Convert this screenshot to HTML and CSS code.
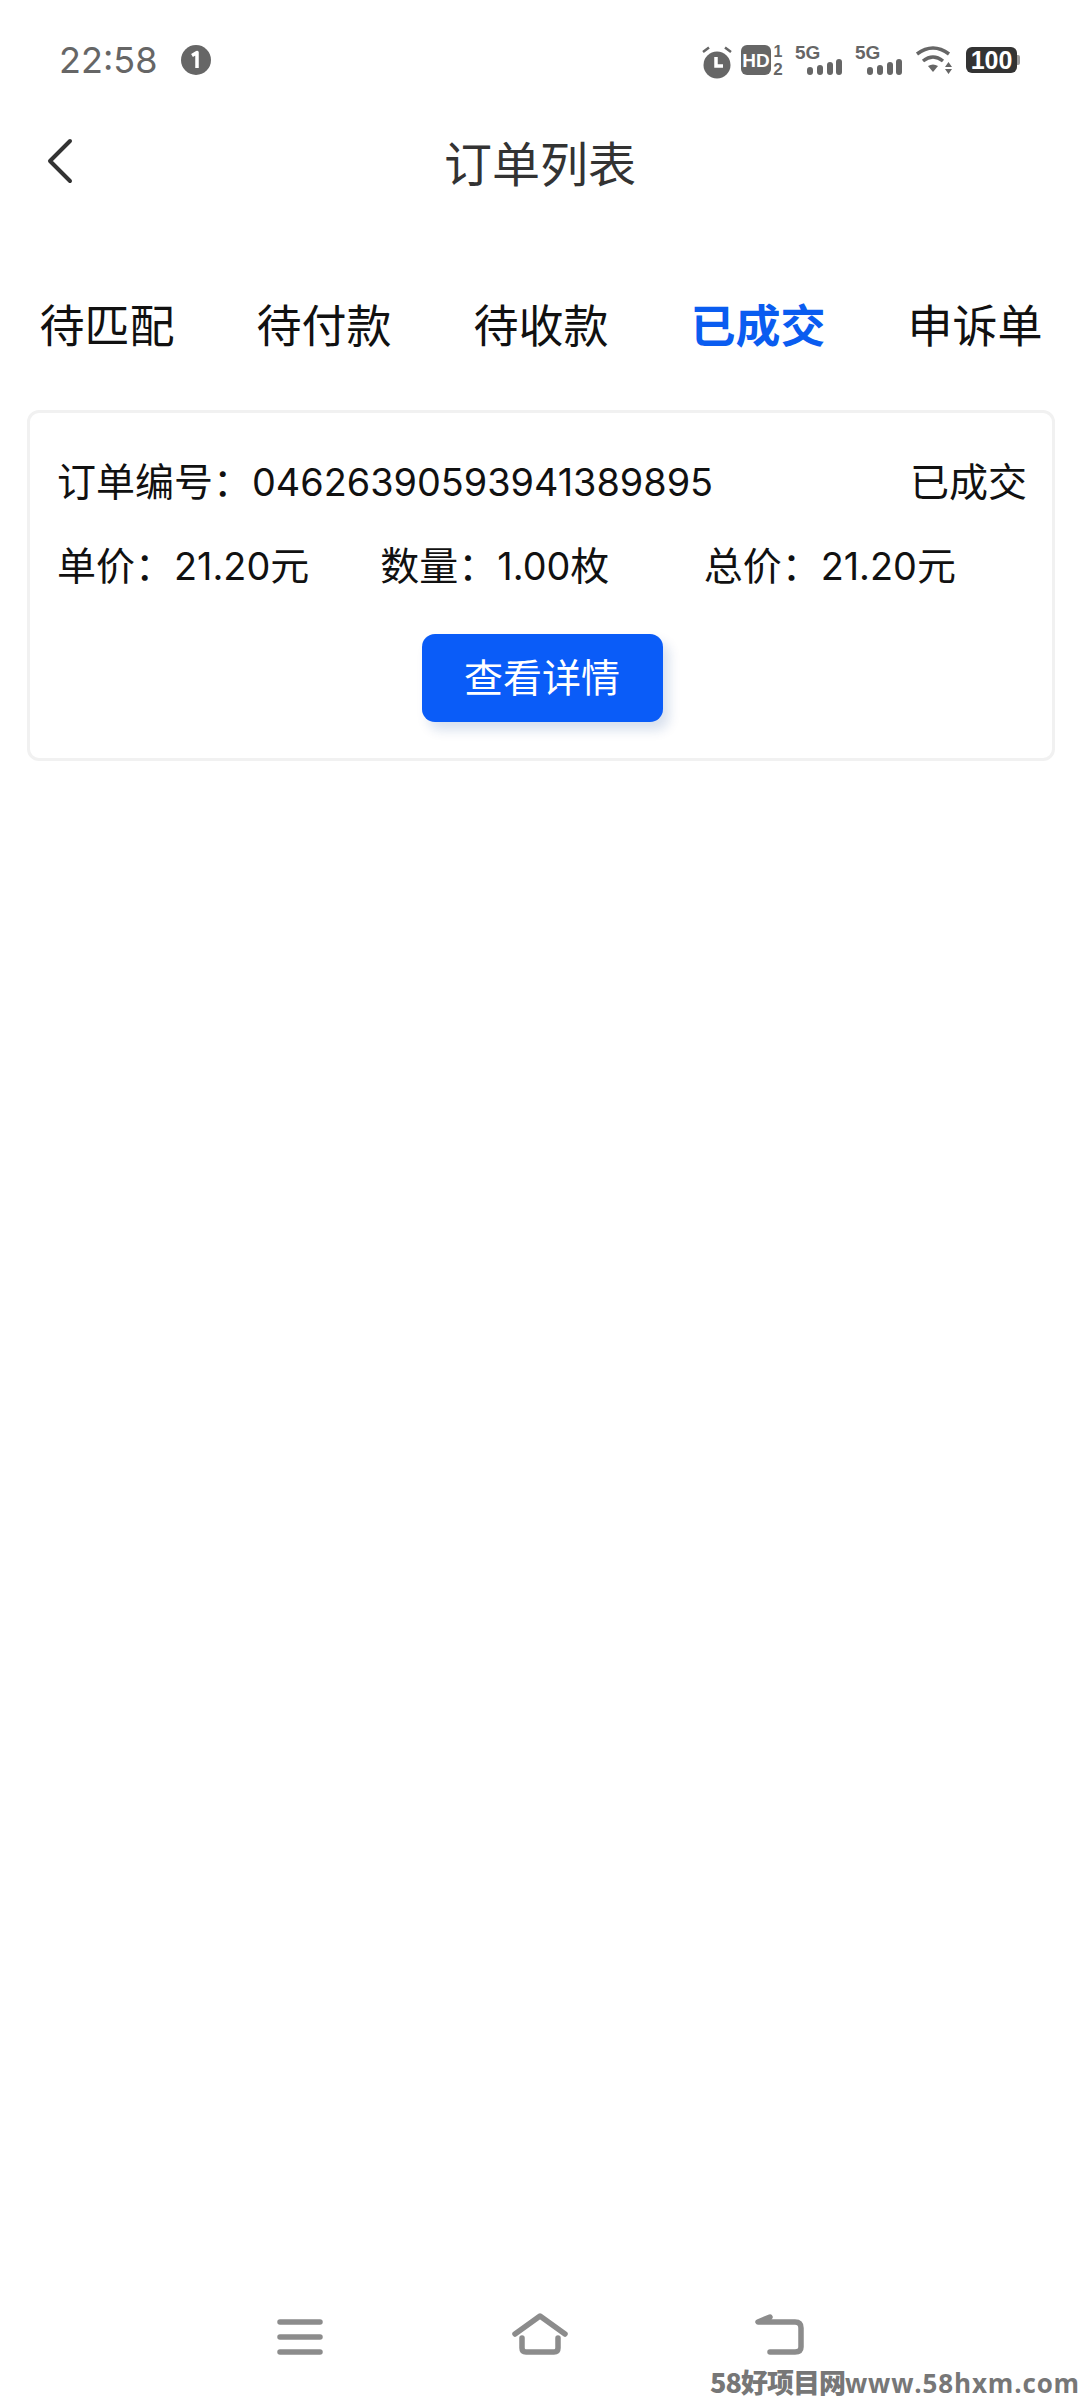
FILE: index.html
```html
<!DOCTYPE html>
<html>
	<head>
		<meta charset="utf-8">
		<title>订单列表</title>
		<link rel="stylesheet" href="styles.css">
	</head>
	<body>
		<div id="page">
			<div class="status">
				<div class="statusLeft">
					<span class="time">22:58</span>
					<svg class="notice" width="30" height="30" viewBox="0 0 30 30">
						<circle cx="15" cy="15" r="15" fill="#666"/>
						<path d="M11 10.500 L16 7.500 V23" fill="none" stroke="#fff" stroke-width="3.500" stroke-linejoin="round"/>
					</svg>
				</div>
				<div class="statusRight">
					<svg width="32" height="36" viewBox="0 0 32 36">
						<circle cx="16" cy="23" r="13.500" fill="#666"/>
						<path d="M15 15 V24 H22" fill="none" stroke="#fff" stroke-width="3.500"/>
						<path d="M2 10 L8 5.500 M30 10 L24 5.500" stroke="#666" stroke-width="2.500"/>
					</svg>
					<svg width="44" height="32" viewBox="0 0 44 32">
						<rect x="0" y="1" width="30" height="30" rx="6" fill="#666"/>
						<text class="iconText" x="15" y="23" font-size="19" fill="#fff" text-anchor="middle">HD</text>
						<text class="iconText" x="37" y="13" font-size="16" fill="#666" text-anchor="middle">1</text>
						<text class="iconText" x="37" y="31" font-size="17" fill="#666" text-anchor="middle">2</text>
					</svg>
					<svg class="sim" width="48" height="32" viewBox="0 0 48 32">
						<text class="iconText" x="0" y="15" font-size="19" fill="#666">5G</text>
						<rect x="12" y="23" width="6" height="8" rx="3" fill="#666"/>
						<rect x="22" y="21" width="6" height="10" rx="3" fill="#666"/>
						<rect x="32" y="18" width="6" height="13" rx="3" fill="#666"/>
						<rect x="41" y="15" width="6" height="16" rx="3" fill="#666"/>
					</svg>
					<svg class="sim" width="48" height="32" viewBox="0 0 48 32">
						<text class="iconText" x="0" y="15" font-size="19" fill="#666">5G</text>
						<rect x="12" y="23" width="6" height="8" rx="3" fill="#666"/>
						<rect x="22" y="21" width="6" height="10" rx="3" fill="#666"/>
						<rect x="32" y="18" width="6" height="13" rx="3" fill="#666"/>
						<rect x="41" y="15" width="6" height="16" rx="3" fill="#666"/>
					</svg>
					<svg class="wifi" width="38" height="30" viewBox="0 0 38 30">
						<path d="M2 9 Q18 -3 34 9 M8 16 Q18 8 28 16" fill="none" stroke="#666" stroke-width="3.500"/>
						<path d="M13 21 Q18 18 23 21 L18 27 Z" fill="#666"/>
						<path d="M30 22 L33.500 17 L37 22 Z M30 24 H37 L33.500 29 Z" fill="#666"/>
					</svg>
					<div class="battery">
						<span class="batteryBody">100</span>
						<span class="batteryNub"></span>
					</div>
				</div>
			</div>
			<div class="header">
				<a class="back" href="javascript:;">
					<svg width="28" height="46" viewBox="0 0 28 46">
						<path d="M24 3 L4 23 L24 43" fill="none" stroke="#333" stroke-width="4" stroke-linecap="round" stroke-linejoin="round"/>
					</svg>
				</a>
				<div class="title">订单列表</div>
			</div>
			<div class="tabs">
				<a class="tab" href="javascript:;">待匹配</a>
				<a class="tab" href="javascript:;">待付款</a>
				<a class="tab" href="javascript:;">待收款</a>
				<a class="tab on" href="javascript:;">已成交</a>
				<a class="tab" href="javascript:;">申诉单</a>
			</div>
			<div class="card">
				<div class="row">
					<span>订单编号：<span class="num">04626390593941389895</span></span>
					<span>已成交</span>
				</div>
				<div class="row three">
					<span>单价：<span class="num">21.20</span>元</span>
					<span>数量：<span class="num">1.00</span>枚</span>
					<span>总价：<span class="num">21.20</span>元</span>
				</div>
				<div class="btnWrap">
					<a class="btn" href="javascript:;">查看详情</a>
				</div>
			</div>
			<div class="space"></div>
			<div class="nav">
				<div class="navItem">
					<svg width="46" height="36" viewBox="0 0 46 36">
						<path d="M3 3 H43 M3 18 H43 M3 33 H43" stroke="#8c8c8c" stroke-width="5.500" stroke-linecap="round"/>
					</svg>
				</div>
				<div class="navItem">
					<svg width="58" height="43" viewBox="0 0 58 43">
						<path d="M4 22 L29 4 L54 22" fill="none" stroke="#8c8c8c" stroke-width="5.500" stroke-linecap="round" stroke-linejoin="round"/>
						<path d="M11 26 V36 Q11 40 15 40 H43 Q47 40 47 36 V26" fill="none" stroke="#8c8c8c" stroke-width="5.500" stroke-linecap="round"/>
					</svg>
				</div>
				<div class="navItem">
					<svg width="50" height="43" viewBox="0 0 50 43">
						<path d="M15 5 L3 10 H40 Q46 10 46 16 V35 Q46 40 40 40 H15" fill="none" stroke="#8c8c8c" stroke-width="5.500" stroke-linecap="round" stroke-linejoin="round"/>
					</svg>
				</div>
			</div>
			<div class="mark"><span class="markCn">58好项目网</span>www.58hxm.com</div>
		</div>
	</body>
</html>
```

FILE: styles.css
```css
*{margin: 0;padding: 0;box-sizing: border-box;}
html,
body{width: 100%;height: 100%;overflow: hidden;background-color: #fff;}
body{font-family: "Noto Sans CJK SC", "Noto Sans", sans-serif;color: #111;}
a{text-decoration: none;color: inherit;}
svg{overflow: visible;}
#page{width: 1080px;height: 2400px;position: relative;display: flex;flex-direction: column;}

.status{height: 120px;padding: 0 60px 0 59px;display: flex;justify-content: space-between;align-items: center;}
.statusLeft{display: flex;align-items: center;gap: 24px;}
.time{font-family: Inter, sans-serif;font-size: 36px;color: #666;}
.statusRight{display: flex;align-items: center;gap: 8px;}
.iconText{font-family: "Liberation Sans", sans-serif;font-weight: 700;}
.sim{margin-left: 2px;margin-right: 2px;}
.wifi{margin-left: 2px;}
.battery{display: flex;align-items: center;margin-left: 5px;}
.batteryBody{width: 51px;height: 26px;background-color: #333;border-radius: 6px;color: #fff;
	font-family: "Liberation Sans", sans-serif;font-weight: 700;font-size: 25px;line-height: 26px;text-align: center;}
.batteryNub{width: 3px;height: 10px;background-color: #999;border-radius: 0 2px 2px 0;}

.header{height: 82px;position: relative;display: flex;align-items: center;justify-content: center;}
.back{position: absolute;left: 46px;top: 18px;}
.title{font-size: 48px;line-height: 78px;color: #333;}

.tabs{margin-top: 90px;padding-left: 17px;display: flex;gap: 37px;}
.tab{width: 180px;text-align: center;font-size: 45px;line-height: 64px;color: #111;}
.tab.on{color: #0a5cf0;font-weight: 700;}

.card{margin: 54px 25px 0 27px;height: 351px;padding: 38px 25px 0 27px;border: 3px solid #f1f1f1;border-radius: 12px;}
.row{display: flex;justify-content: space-between;font-size: 39px;line-height: 56px;margin-bottom: 25px;}
.row.three{display: grid;grid-template-columns: repeat(3, 1fr);gap: 0;margin-bottom: 40px;}
.num{font-family: Inter, sans-serif;font-size: 37.800px;}
.btnWrap{display: flex;justify-content: center;}
.btn{width: 241px;height: 88px;background-color: #0a5cf8;border-radius: 13px;color: #fff;font-size: 39px;line-height: 82px;
	text-align: center;box-shadow: 6px 8px 12px rgba(10, 60, 140, 0.16);}

.space{flex: 1;}
.nav{display: flex;justify-content: center;align-items: flex-end;margin-bottom: 45px;}
.navItem{width: 240px;display: flex;justify-content: center;}

.mark{position: absolute;right: 0;bottom: 0;font-family: "Open Sans", sans-serif;font-size: 26px;line-height: 34px;font-weight: 700;color: #777;
	letter-spacing: 0.850px;white-space: nowrap;}
.markCn{font-family: "Noto Sans CJK SC", sans-serif;font-size: 27px;font-weight: 900;letter-spacing: -1px;}
```
